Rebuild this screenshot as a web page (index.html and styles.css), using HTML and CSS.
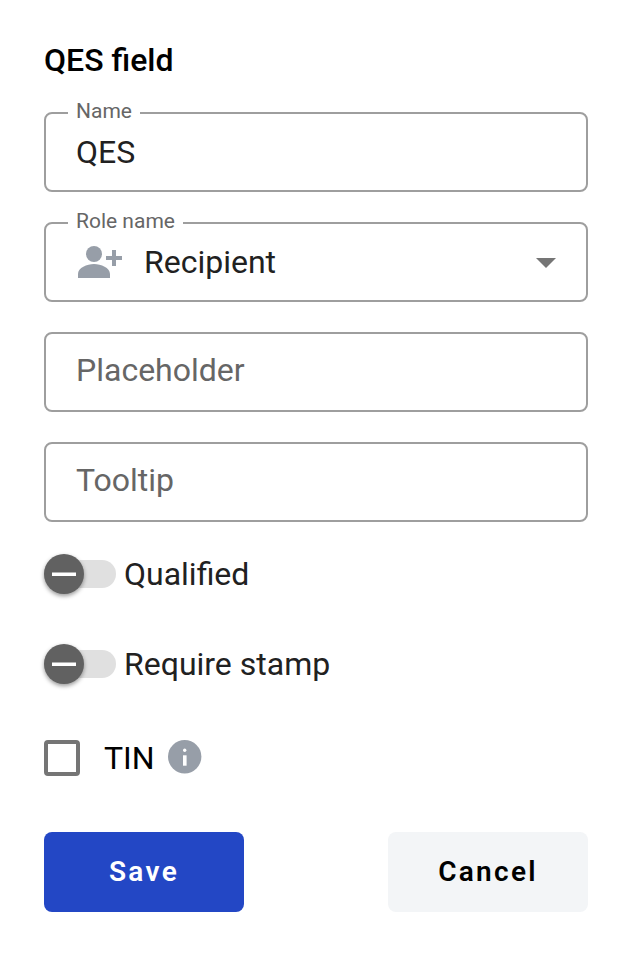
FILE: index.html
```html
<!DOCTYPE html>
<html lang="en">
<head>
<meta charset="utf-8">
<title>QES field</title>
<link rel="stylesheet" href="styles.css">
</head>
<body>
<form class="panel">
  <h1 class="title">QES field</h1>
  <div class="field"><span class="label">Name</span><span class="value">QES</span></div>
  <div class="field">
    <span class="label">Role name</span>
    <svg class="person" viewBox="0 0 44 34"><circle cx="16" cy="9" r="8"/><path d="M0 33v-4c0-6.300 9-10 16-10s16 3.700 16 10v4zM34 5h4v6h6v4h-6v6h-4v-6h-6v-4h6z"/></svg>
    <span class="value">Recipient</span>
    <svg class="arrow" viewBox="0 0 20 10"><path d="M0 0h20L10 10z"/></svg>
  </div>
  <div class="field"><span class="placeholder">Placeholder</span></div>
  <div class="field"><span class="placeholder">Tooltip</span></div>
  <div class="toggle"><span class="track"><span class="thumb"></span></span><span>Qualified</span></div>
  <div class="toggle second"><span class="track"><span class="thumb"></span></span><span>Require stamp</span></div>
  <div class="check">
    <span class="box"></span><span class="tin">TIN</span>
    <svg class="info" viewBox="0 0 34 34"><circle cx="16.700" cy="16.700" r="16.700"/><circle class="mark" cx="16.700" cy="10.300" r="1.700"/><path class="mark" d="M15 15.300h3.600v10.400h-3.600z"/></svg>
  </div>
  <div class="actions"><button type="button" class="save">Save</button><button type="button" class="cancel">Cancel</button></div>
</form>
</body>
</html>
```
FILE: styles.css
```css
* { box-sizing: border-box; }
body { margin: 0; background: #fff; color: #212121; font-family: Roboto, sans-serif; }
.panel { padding: 40px 42px 0 44px; font-size: 32px; line-height: 40px; }
.title { margin: 0 0 32px; color: #000; font-size: 32px; line-height: 40px; font-weight: 500; }
.field { position: relative; display: flex; align-items: center; height: 80px; padding: 0 30px; border: 2px solid #9e9e9e; border-radius: 8px; margin-bottom: 30px; }
.label { position: absolute; top: -15px; left: 22px; padding: 0 8px; background: #fff; color: #666; font-size: 21px; line-height: 24px; }
.placeholder { color: #666; margin-top: -4px; }
.person { width: 44px; height: 34px; margin: 0 22px 0 2px; fill: #979ea8; }
.arrow { width: 20px; height: 10px; margin: 2px 0 0 auto; fill: #757575; }
.toggle { display: flex; align-items: center; height: 40px; margin-top: 32px; gap: 8px; }
.second { margin-top: 50px; }
.track { display: flex; align-items: center; width: 72px; height: 28px; border-radius: 14px; background: #e0e0e0; }
.thumb { display: flex; align-items: center; justify-content: center; width: 40px; height: 40px; border-radius: 50%; background: #616161; box-shadow: 0 2px 4px #0006; }
.thumb::after { content: ""; width: 24px; height: 4px; background: linear-gradient(#b0b0b0 1px, #fff 1px); }
.check { display: flex; align-items: center; height: 40px; margin-top: 54px; color: #000; }
.box { width: 36px; height: 36px; border: 4px solid #757575; border-radius: 4px; }
.tin { margin-left: 24px; }
.info { width: 34px; height: 34px; margin: -2px 0 0 13px; fill: #979ea8; }
.mark { fill: #fff; }
.actions { display: flex; justify-content: space-between; margin-top: 54px; }
.actions button { width: 200px; height: 80px; padding: 0; border: 0; border-radius: 8px; font: 600 28px/40px Roboto, sans-serif; letter-spacing: 2.3px; }
.save { background: #2347c5; color: #fff; }
.cancel { background: #f3f5f7; color: #000; }
```
